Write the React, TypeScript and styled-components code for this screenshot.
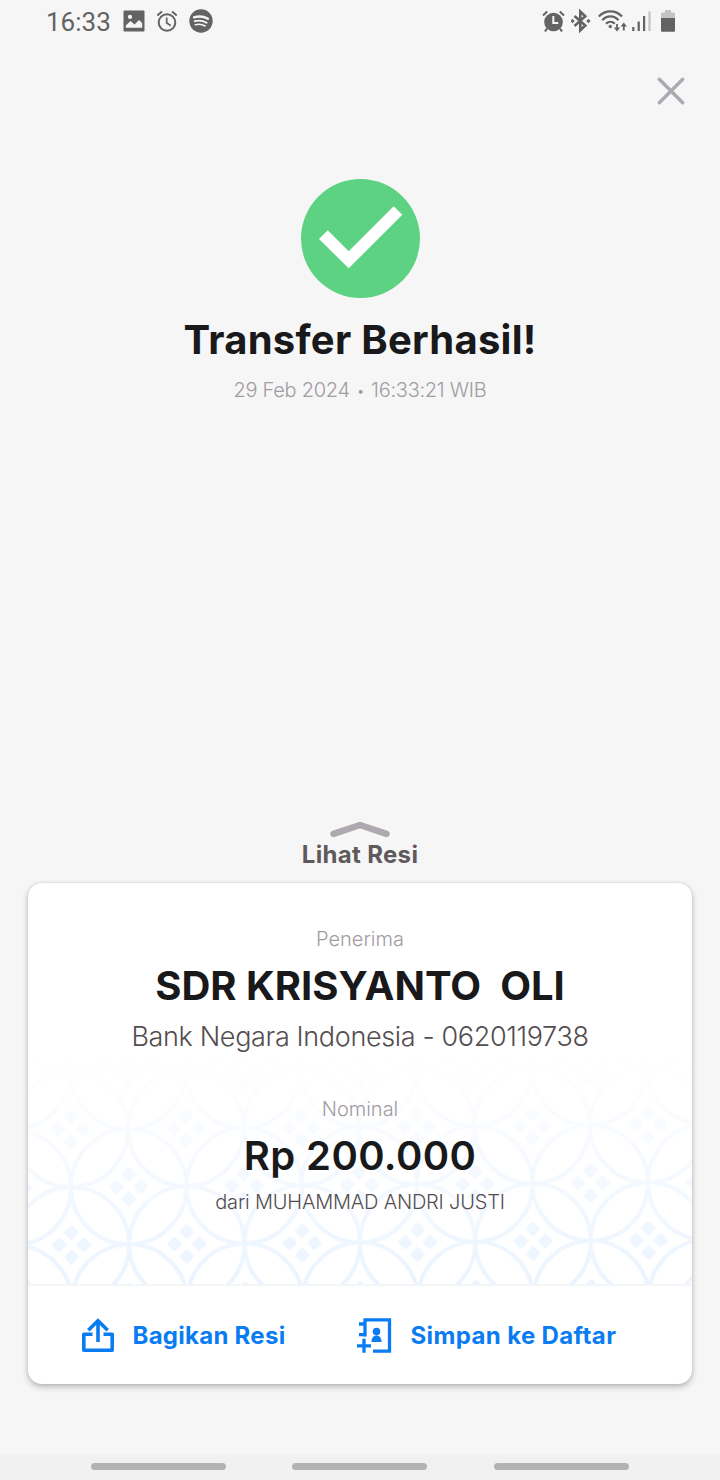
import React from 'react';
import styled, { createGlobalStyle } from 'styled-components';

const GlobalStyle = createGlobalStyle`
  * { box-sizing: border-box; }
  body { margin: 0; background: #f5f5f5; }
`;

const Screen = styled.main`
  display: flex;
  flex-direction: column;
  width: 720px;
  height: 1480px;
  background: #f6f6f6;
  font-family: Inter, 'Liberation Sans', sans-serif;
  overflow: hidden;
`;

const StatusBar = styled.header`
  display: flex;
  justify-content: space-between;
  align-items: center;
  height: 42px;
  padding: 0 44px 0 46px;
  color: #636363;
`;

const StatusGroup = styled.div<{ $gap: number }>`
  display: flex;
  align-items: center;
  gap: ${(p) => p.$gap}px;
  svg { display: block; }
`;

const Clock = styled.span`
  font: 400 26px/42px Roboto, sans-serif;
  letter-spacing: 0;
  width: 66px;
  padding-top: 2px;
  white-space: nowrap;
`;

const TopBar = styled.div`
  display: flex;
  justify-content: flex-end;
  height: 137px;
  padding: 34px 34px 0 0;
`;

const CloseButton = styled.button`
  width: 30px;
  height: 30px;
  padding: 0;
  border: 0;
  background: none;
  svg { display: block; }
`;

const Hero = styled.section`
  display: flex;
  flex-direction: column;
  align-items: center;
  height: 642px;
`;

interface LineProps {
  $size: number;
  $line: number;
  $weight: number;
  $color: string;
  $top?: number;
  $track?: number;
}

const Line = styled.p<LineProps>`
  margin: ${(p) => p.$top ?? 0}px 0 0;
  font-size: ${(p) => p.$size}px;
  line-height: ${(p) => p.$line}px;
  font-weight: ${(p) => p.$weight};
  color: ${(p) => p.$color};
  letter-spacing: ${(p) => p.$track ?? 0}px;
  white-space: pre;
`;

const Dot = styled.span`
  font-size: 14px;
  padding: 0 1.5px;
  vertical-align: 1px;
  line-height: 1;
`;

const ReceiptToggle = styled.div`
  display: flex;
  flex-direction: column;
  align-items: center;
  height: 62px;
  svg { display: block; }
`;

const Card = styled.section`
  width: 664px;
  height: 501px;
  margin: 0 28px;
  flex: none;
  border-radius: 14px;
  background: #fff;
  box-shadow: 0 3px 6px rgba(0, 0, 0, 0.24), 0 0 3px rgba(0, 0, 0, 0.12);
  overflow: hidden;
`;

const CardBody = styled.div`
  position: relative;
  display: flex;
  flex-direction: column;
  align-items: center;
  height: 403px;
  padding-top: 44px;
  border-bottom: 2px solid #f4f5f6;
`;

const Ornament = styled.svg`
  position: absolute;
  left: 0;
  bottom: 0;
`;

const Details = styled.div`
  position: relative;
  display: flex;
  flex-direction: column;
  align-items: center;
`;

const Actions = styled.div`
  display: flex;
  height: 98px;
`;

const Action = styled.button<{ $left: number; $width: number; $track: number }>`
  display: flex;
  align-items: center;
  gap: 17.5px;
  width: ${(p) => p.$width}px;
  padding: 0 0 0 ${(p) => p.$left}px;
  border: 0;
  background: none;
  color: #0a7cf2;
  font: 700 24px/30px Inter, sans-serif;
  letter-spacing: ${(p) => p.$track}px;
  white-space: nowrap;
  svg { display: block; flex: none; }
  span { padding-top: 2px; }
`;

const NavBar = styled.nav`
  display: flex;
  justify-content: center;
  gap: 66.5px;
  height: 26px;
  margin-top: auto;
  padding: 9px 1px 0 0;
  background: #f1f1f1;
`;

const NavPill = styled.span`
  width: 135px;
  height: 7px;
  border-radius: 4px;
  background: #b3b3b3;
`;

const PictureIcon = () => (
  <svg width="22" height="22" viewBox="0 0 22 22">
    <path fill="currentColor" fillRule="evenodd" d="M1.500.5h19a1 1 0 0 1 1 1v19a1 1 0 0 1-1 1h-19a1 1 0 0 1-1-1v-19a1 1 0 0 1 1-1zM2.800 17.800h16.400v-4.800l-3.200-3-4.500 4.500-4-3.500-4.700 4.500zM7 4.800a2.100 2.100 0 1 0 0 4.200 2.100 2.100 0 0 0 0-4.200z" />
  </svg>
);

const AlarmIcon = () => (
  <svg width="22" height="22" viewBox="0 0 22 22" fill="none" stroke="currentColor">
    <circle cx="11" cy="12.500" r="8.300" strokeWidth="2" />
    <path d="M1.300 5.500 6 1.500M20.700 5.500 16 1.500" strokeWidth="2" />
    <path d="M10.700 7.500v5.500l4 2.500" strokeWidth="1.700" />
  </svg>
);

const SpotifyIcon = () => (
  <svg width="24" height="24" viewBox="0 0 24 24">
    <circle cx="12" cy="12" r="11.700" fill="currentColor" />
    <g fill="none" stroke="#f6f6f6" strokeLinecap="round">
      <path d="M5 8.300c4.700-1.300 10-.8 14 1.500" strokeWidth="2.300" />
      <path d="M5.700 12.200c4-1.100 8.300-.6 11.900 1.500" strokeWidth="1.900" />
      <path d="M6.300 15.800c3.300-.9 6.800-.5 9.800 1.200" strokeWidth="1.500" />
    </g>
  </svg>
);

const AlarmSolidIcon = () => (
  <svg width="23" height="23" viewBox="0 0 23 23" fill="none" stroke="currentColor">
    <circle cx="11.500" cy="12" r="9.300" fill="currentColor" stroke="none" />
    <path d="M1 5.500 5.200 1.500M22 5.500 17.800 1.500" strokeWidth="2" />
    <path d="M5 18.500 3 21.500M18 18.500l2 3" strokeWidth="2.200" />
    <path d="M11.300 6v7h5" stroke="#f6f6f6" strokeWidth="2" />
  </svg>
);

const BluetoothIcon = () => (
  <svg width="21" height="24" viewBox="0 0 21 24">
    <path d="m3.500 7 10.800 9.500-5 4.800V2.500l5 4.700L3.500 17" fill="none" stroke="currentColor" strokeWidth="2.600" />
    <path d="m1.500 9.800 2.200 2.200-2.200 2.200L-.5 12zM17.500 9.800 19.500 12l-2 2.200L15.300 12z" fill="currentColor" />
  </svg>
);

const WifiIcon = () => (
  <svg width="29" height="23" viewBox="0 0 29 23" fill="none" stroke="currentColor" strokeWidth="2.200">
    <path d="M.8 6.500C7.500-.3 17.500-.3 24 6.500M4.300 10.200c4.700-5 11.500-5 16.200 0M8 13.700c2.600-2.600 6.200-2.600 8.800 0" />
    <circle cx="12.300" cy="16.500" r="1.700" fill="currentColor" stroke="none" />
    <path d="M19 14v6M25.800 20.500v-6" strokeWidth="1.800" />
    <path d="M15.800 17.500h6.400L19 21.500zM22.600 16.500H29L25.800 12.500z" fill="currentColor" stroke="none" />
  </svg>
);

const SignalIcon = () => (
  <svg width="21" height="22" viewBox="2 0 21 22" fill="none" stroke="currentColor" strokeWidth="2.200">
    <path d="M1.300 17v4M6.700 11.500V21M12.100 6v15" />
    <path d="M17.500 1.500V21" stroke="#c4c4c4" />
  </svg>
);

const BatteryIcon = () => (
  <svg width="15" height="23" viewBox="0 0 15 23">
    <path d="M4 0h6v2.500h3a1 1 0 0 1 1 1V8.500H0v-5a1 1 0 0 1 1-1h3z" fill="#c4c4c4" />
    <path d="M0 8h14v12.800a1 1 0 0 1-1 1H1a1 1 0 0 1-1-1z" fill="currentColor" />
  </svg>
);

const SignalBars = styled.span`
  display: flex;
  svg { overflow: visible; }
`;

const SuccessIcon = () => (
  <svg width="119" height="119" viewBox="0 0 119 119">
    <circle cx="59.500" cy="59.500" r="59.500" fill="#5dd283" />
    <path d="M18 60l8.700-8.700 21 21 45-45 8.600 8.500-53.600 53.500z" fill="#fff" />
  </svg>
);

const ShareIcon = () => (
  <svg width="34" height="36" viewBox="0 0 34 36" fill="none" stroke="currentColor" strokeWidth="3.600">
    <path d="M11.500 17.300H2.800v15.900h28.400V17.300H22.500" strokeLinejoin="round" />
    <path d="M17 25V4M7.300 13.300L17 3.700l9.700 9.600" />
  </svg>
);

const ContactIcon = () => (
  <svg width="36" height="37" viewBox="0 0 36 37" fill="none" stroke="currentColor" strokeWidth="3.300">
    <path d="M8 19.500V2.800h24.500V34.200H16" />
    <path d="M2 7h7M2 17.700h7" />
    <path d="M0 28.800h14M7 21.800v14" />
    <circle cx="19.500" cy="14.500" r="3.800" fill="currentColor" stroke="none" />
    <path d="M14.500 25c0-4 2-6.500 5-6.500s5 2.500 5 6.500z" fill="currentColor" stroke="none" />
  </svg>
);

const KawungPattern = () => (
  <Ornament width="664" height="236" viewBox="0 0 664 236">
    <defs>
      <pattern id="kawung" width="115.400" height="115.400" patternUnits="userSpaceOnUse" patternTransform="translate(100.700 138.700) rotate(-0.450)">
        <g fill="none" stroke="#ebf4ff" strokeWidth="4">
          <circle cx="57.700" cy="57.700" r="57.700" />
          <circle cx="0" cy="0" r="57.700" />
          <circle cx="115.400" cy="0" r="57.700" />
          <circle cx="0" cy="115.400" r="57.700" />
          <circle cx="115.400" cy="115.400" r="57.700" />
        </g>
        {[[0, 0], [115.4, 0], [0, 115.4], [115.4, 115.4], [57.7, 57.7]].map(([x, y]) =>
          [[0, -12.3], [12.3, 0], [0, 12.3], [-12.3, 0]].map(([dx, dy]) => (
            <rect
              key={`${x}-${y}-${dx}-${dy}`}
              x={x + dx - 5.6}
              y={y + dy - 5.6}
              width="11.200"
              height="11.200"
              rx="2"
              fill="#ebf4ff"
              transform={`rotate(45 ${x + dx} ${y + dy})`}
            />
          ))
        )}
      </pattern>
      <linearGradient id="fade" x1="0" y1="0" x2="0" y2="1">
        <stop offset="0" stopColor="#fff" stopOpacity="0" />
        <stop offset="1" stopColor="#fff" stopOpacity="1" />
      </linearGradient>
      <mask id="fadeMask">
        <rect width="664" height="236" fill="url(#fade)" />
      </mask>
    </defs>
    <rect width="664" height="236" fill="url(#kawung)" mask="url(#fadeMask)" />
  </Ornament>
);

export default function App() {
  return (
    <>
      <GlobalStyle />
      <Screen>
        <StatusBar>
          <StatusGroup $gap={11}>
            <Clock>16:33</Clock>
            <PictureIcon />
            <AlarmIcon />
            <SpotifyIcon />
          </StatusGroup>
          <StatusGroup $gap={6.3}>
            <AlarmSolidIcon />
            <BluetoothIcon />
            <WifiIcon />
            <SignalBars><SignalIcon /></SignalBars>
            <BatteryIcon />
          </StatusGroup>
        </StatusBar>
        <TopBar>
          <CloseButton aria-label="Tutup">
            <svg width="30" height="30" viewBox="0 0 30 30" stroke="#aea8b0" strokeWidth="3.400" strokeLinecap="round">
              <path d="M3.300 3.300l23.400 23.400M26.700 3.300L3.300 26.700" />
            </svg>
          </CloseButton>
        </TopBar>
        <Hero>
          <SuccessIcon />
          <Line as="h1" $size={40} $line={48} $weight={700} $color="#19191b" $top={18} $track={0.27}>Transfer Berhasil!</Line>
          <Line $size={20} $line={28} $weight={300} $color="#a19ba3" $top={12} $track={-0.28}>29 Feb 2024 <Dot>•</Dot> 16:33:21 WIB</Line>
        </Hero>
        <ReceiptToggle>
          <svg width="62" height="19" viewBox="0 0 62 19" fill="none" stroke="#aea8b0" strokeWidth="6.500" strokeLinecap="round" strokeLinejoin="round">
            <path d="M4.500 12.800L31 4l26.500 8.800" />
          </svg>
          <Line $size={24} $line={28} $weight={700} $color="#5f595c" $top={1} $track={0.33}>Lihat Resi</Line>
        </ReceiptToggle>
        <Card>
          <CardBody>
            <KawungPattern />
            <Details>
              <Line $size={20} $line={24} $weight={300} $color="#a19ba3">Penerima</Line>
              <Line as="h2" $size={40} $line={48} $weight={700} $color="#19191b" $top={11}>{'SDR KRISYANTO  OLI'}</Line>
              <Line $size={27} $line={32} $weight={300} $color="#534d50" $top={11} $track={-0.36}>Bank Negara Indonesia - 0620119738</Line>
              <Line $size={20} $line={24} $weight={300} $color="#a19ba3" $top={44}>Nominal</Line>
              <Line as="h2" $size={40} $line={48} $weight={600} $color="#19191b" $top={11} $track={0.4}>Rp 200.000</Line>
              <Line $size={20} $line={24} $weight={300} $color="#534d50" $top={10} $track={-0.2}>dari MUHAMMAD ANDRI JUSTI</Line>
            </Details>
          </CardBody>
          <Actions>
            <Action $left={53} $width={329} $track={0.27}>
              <ShareIcon />
              <span>Bagikan Resi</span>
            </Action>
            <Action $left={0} $width={335} $track={0.37}>
              <ContactIcon />
              <span>Simpan ke Daftar</span>
            </Action>
          </Actions>
        </Card>
        <NavBar>
          <NavPill />
          <NavPill />
          <NavPill />
        </NavBar>
      </Screen>
    </>
  );
}
